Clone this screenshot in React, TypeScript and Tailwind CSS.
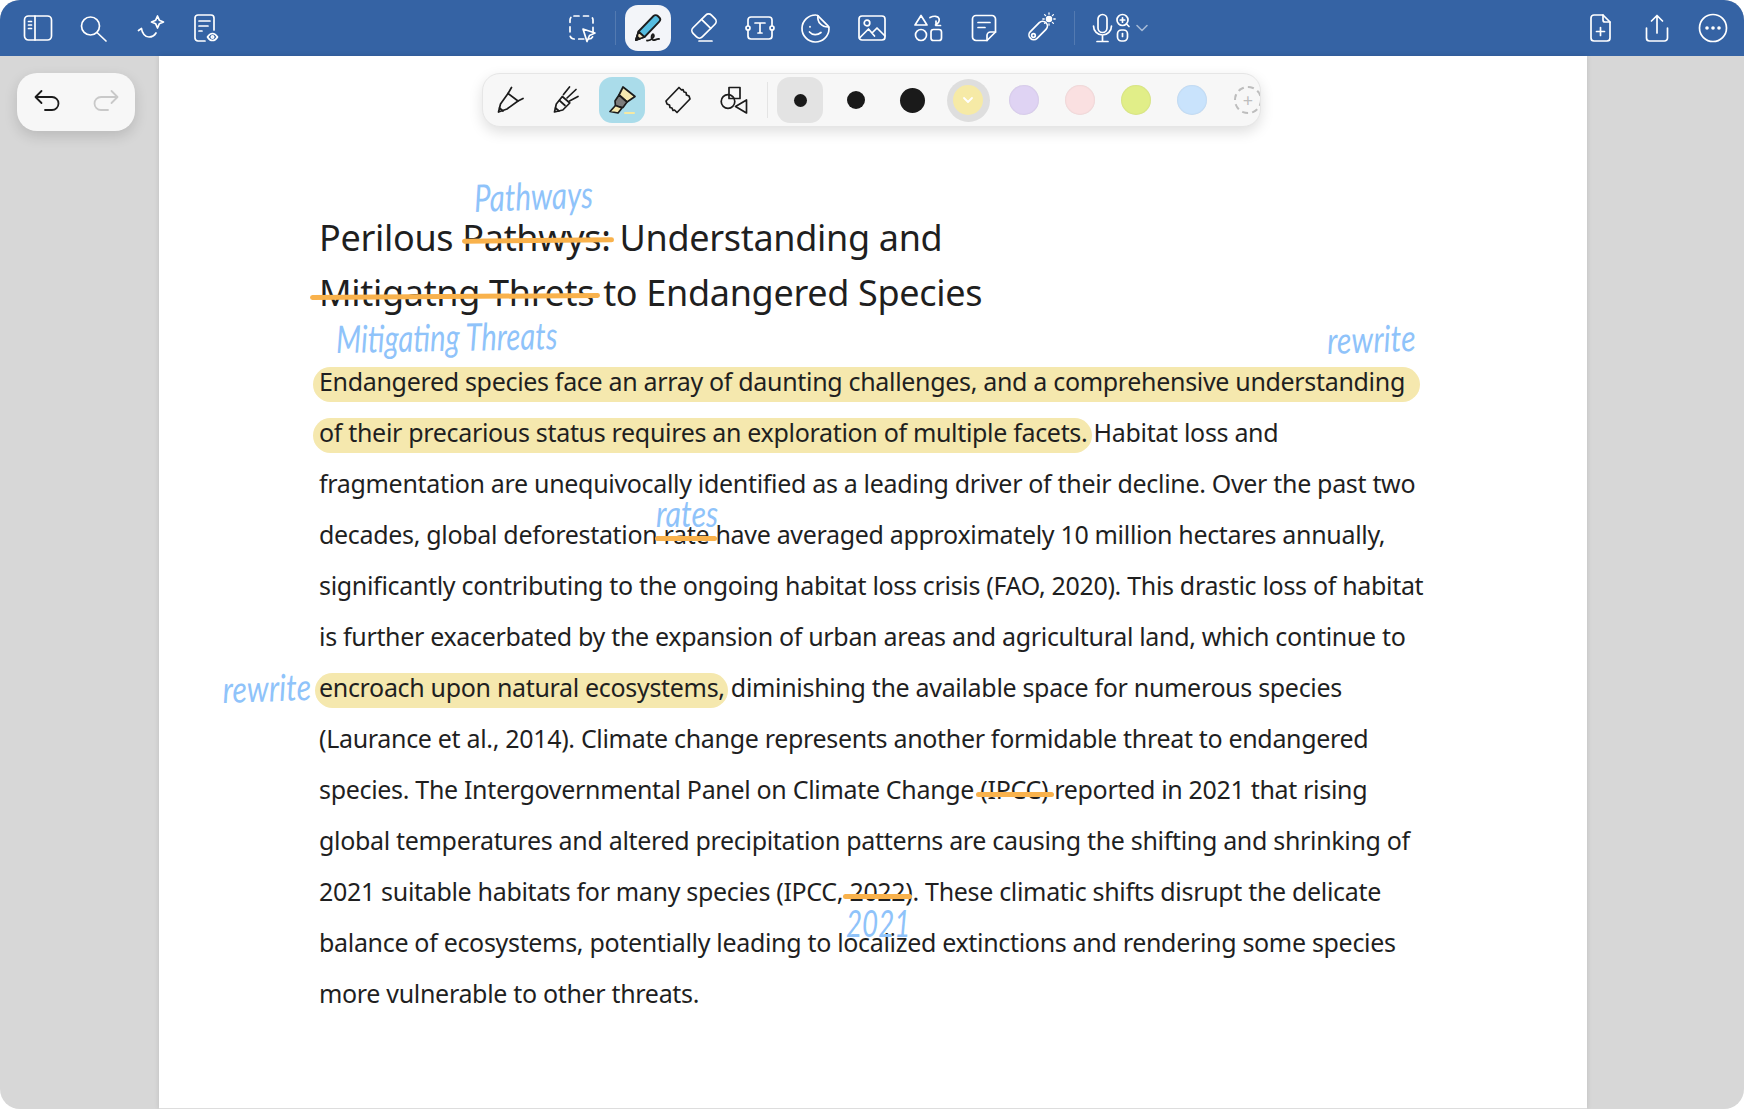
import React from 'react';

const HAND = "font-['Lato',sans-serif] font-normal italic text-[#8fc3fa] whitespace-nowrap tracking-normal";

const Svg = ({ children, dark }: { children: React.ReactNode; dark?: boolean }) => (
  <svg
    width="32"
    height="32"
    viewBox="0 0 32 32"
    fill="none"
    stroke={dark ? '#1c1c1c' : '#ffffff'}
    strokeWidth="1.7"
    strokeLinecap="round"
    strokeLinejoin="round"
  >
    {children}
  </svg>
);

const Slot = ({ children }: { children: React.ReactNode }) => (
  <div className="w-14 h-14 shrink-0 flex items-center justify-center">{children}</div>
);

const topLeft = [
  <Svg key="side">
    <rect x="2.5" y="4" width="27" height="24" rx="4" />
    <path d="M13 4v24M6.5 9.5h3M6.5 13h3M6.5 16.5h3" />
  </Svg>,
  <Svg key="search">
    <circle cx="12.5" cy="14" r="9" />
    <path d="M19 20.5l9 8.5" />
  </Svg>,
  <Svg key="ai">
    <path d="M23.5 4l1.8 4.2 4.2 1.8-4.2 1.8-1.8 4.2-1.8-4.2-4.2-1.8 4.2-1.8z" />
    <path d="M4.5 18.5l3-2c.5 4.5 3.500 8.500 7.500 8.500 3 0 5.500-1.500 7-4" />
  </Svg>,
  <Svg key="doc">
    <path d="M15 29H8a3 3 0 0 1-3-3V6a3 3 0 0 1 3-3h13a3 3 0 0 1 3 3v12" />
    <path d="M9 9h11M9 14h9M9 19h3" />
    <path d="M17.500 25c1.500-2.500 3.500-3.500 5-3.500s3.500 1 5 3.500c-1.500 2.500-3.500 3.500-5 3.500s-3.500-1-5-3.500z" />
    <circle cx="22.500" cy="25" r="1.200" />
  </Svg>,
];

const topMiddle = [
  <Svg key="eraser">
    <g transform="rotate(45 16 14)">
      <rect x="9.500" y="1" width="13" height="26" rx="4" />
      <path d="M9.500 11h13" />
    </g>
    <path d="M11 29h13" />
  </Svg>,
  <Svg key="text">
    <rect x="4" y="5" width="24" height="22" rx="3" />
    <circle cx="4" cy="16" r="2" fill="#3563a4" />
    <circle cx="28" cy="16" r="2" fill="#3563a4" />
    <path d="M11 11h10M16 11v10M14 21h4" />
  </Svg>,
  <Svg key="sticker">
    <path d="M29 17A13.500 13.500 0 1 1 16 3c.8 0 1.500.3 2 .8l10 10c.7.7 1 1.500 1 3.200z" />
    <path d="M18 3.800c-1 6 3.500 11.500 10.800 11.200" />
    <path d="M10 14.500v.5M9.500 20c3 3.500 8 3.500 11.500.5" />
  </Svg>,
  <Svg key="image">
    <rect x="3" y="4" width="26" height="24" rx="3" />
    <circle cx="11" cy="11" r="2.800" />
    <path d="M3.500 26l9-9 6 7M16 21l5-5 8 8" />
  </Svg>,
  <Svg key="shapes">
    <path d="M9 3.500l6 9.500H3z" />
    <path d="M18 5.500c4-2 8-1.500 9 1 1 3-1 5-3.500 6.500M24 9v4.500h4.500" />
    <circle cx="9" cy="23" r="5.500" />
    <rect x="19" y="17.500" width="10.500" height="11" rx="2.500" />
  </Svg>,
  <Svg key="note">
    <path d="M19 28.500H8a3.500 3.500 0 0 1-3.500-3.500V7A3.500 3.500 0 0 1 8 3.500h16A3.500 3.500 0 0 1 27.500 7v13z" />
    <path d="M27.500 20h-5a3.500 3.500 0 0 0-3.500 3.500v5M10 10.500h12M10 15.500h7" />
  </Svg>,
  <Svg key="wand">
    <rect x="9" y="7.500" width="9.500" height="22" rx="4.700" transform="rotate(45 14 19)" />
    <circle cx="9.500" cy="23.500" r="1.800" />
    <circle cx="25" cy="7" r="2.400" fill="#ffffff" />
    <path d="M25 .8v1.400M25 11.800v1.400M18.800 7h1.400M29.800 7h1.400M20.600 2.600l1 1M28.400 10.400l1 1M29.400 2.600l-1 1M21.600 10.400l-1 1" strokeWidth="1.300" />
  </Svg>,
];

const Pen = () => (
  <svg width="32" height="32" viewBox="0 0 32 32" strokeLinejoin="round" strokeLinecap="round" stroke="#1c1c1c" strokeWidth="1.800">
    <path d="M4 28l2.500-8.500L21.500 4a3 3 0 0 1 4.300 0l1.500 1.500a3 3 0 0 1 0 4.200L12.500 25z" fill="#56bde0" />
    <path d="M4 28l2.500-8.500 6 5.500z" fill="#f4e6bf" />
    <path d="M4 28l1-3.600 2.600 2.400z" fill="#1c1c1c" />
    <path d="M15 28.500c4 .5 8-4 6.500-6-1.800-1.500-3 4-.5 5.500 2 .8 3.500-1.500 6-1" fill="none" />
  </svg>
);

const Card = ({ children, className }: { children: React.ReactNode; className: string }) => (
  <div className={`absolute bg-[#f7f7f7] ${className}`}>{children}</div>
);

const Pencil = () => (
  <Svg dark>
    <path d="M4.500 28L6.500 20 14 9.500 24 17 13 25z" />
    <path d="M17.500 3.500L14 9.500M24 17l5-2.500M5.500 24l3.500 3" />
  </Svg>
);

const Brush = () => (
  <Svg dark>
    <path d="M4.500 28l1.800-8 6-7.500 7.500 6.500-7 7z" />
    <path d="M13.500 10.500l6-7.500M17 14l9-8.500M19.500 17l8.500-4.500" />
    <path d="M5.500 24l3.500 3M9.500 16.500l5.500 5" />
  </Svg>
);

const Highlighter = () => (
  <svg width="32" height="32" viewBox="0 0 32 32" strokeLinejoin="round" strokeLinecap="round" stroke="#1c1c1c" strokeWidth="1.700">
    <path d="M13 11l4-8 12 9.500-8 5.500z" fill="#f5e9b0" />
    <path d="M13 11l8 7-4 5.500-7.500-1.500-.5-5z" fill="#7c7c7c" />
    <path d="M9.500 21.500L4 27.500l8 1.500 4-5z" fill="#f5e9b0" />
    <path d="M19 29h9" stroke="#f5e9a3" strokeWidth="2" />
  </svg>
);

const Lasso = () => (
  <Svg dark>
    <path d="M17 3.500l2.500 2.500 1.500-.5 1 2.500 2 .5.500 2.500 2.500 1 1 3L15 28.500 12.500 26l-1.500.5-1-2.500-2-.5-.5-2.500-2.500-1-1-3z" />
  </Svg>
);

const Shapes = () => (
  <Svg dark>
    <rect x="11" y="3.500" width="11" height="11" />
    <circle cx="10" cy="17.500" r="6.800" />
    <path d="M28.500 16v13L17.500 22.500z" />
  </Svg>
);

const dots = [
  { cls: 'w-[13px] h-[13px]', box: true },
  { cls: 'w-[18px] h-[18px]', box: false },
  { cls: 'w-[25px] h-[25px]', box: false },
];

const colours = ['bg-[#dfd3f3]', 'bg-[#fae0e1]', 'bg-[#e1ee88]', 'bg-[#c9e3fc]'];

// crossed-out word with the handwritten correction next to it
const Mark = ({
  children,
  barClass,
  note,
  noteClass,
}: {
  children: React.ReactNode;
  barClass: string;
  note?: string;
  noteClass?: string;
}) => (
  <span className="relative inline-block">
    {children}
    <span className={`absolute h-[5px] rounded-full bg-[#f9b24c] ${barClass}`} />
    {note && <span className={`absolute ${HAND} ${noteClass}`}>{note}</span>}
  </span>
);

// band sits behind the text, a little lower than the font's own box
const Hl = ({ children, bandClass }: { children: React.ReactNode; bandClass: string }) => (
  <span className="relative">
    <span className={`absolute top-[3px] h-[35px] -z-10 bg-[#f5e8ae] rounded-[18px] ${bandClass}`} />
    {children}
  </span>
);

const App = () => {
  return (
    <div className="w-[1744px] h-[1110px] bg-white font-['Noto_Sans',sans-serif] text-[#1f1f1f]">
      <div className="h-[1109px] rounded-[20px] overflow-hidden flex flex-col bg-[#d7d7d7]">
        {/* top bar */}
        <div className="h-14 shrink-0 bg-[#3563a4] flex items-center pl-[10px] pr-[3px]">
          {topLeft.map((icon) => (
            <Slot key={icon.key}>{icon}</Slot>
          ))}
          <div className="ml-[320px]">
            <Slot>
              <Svg>
                <rect x="4" y="4" width="23" height="23" rx="4" strokeDasharray="5 4.500" />
                <path d="M17 17l12 4-5.500 2.500L21 29.500z" fill="#3563a4" />
              </Svg>
            </Slot>
          </div>
          <div className="w-[1px] h-[34px] ml-[5px] mr-[4px] bg-white/15" />
          <div className="w-14 h-14 shrink-0 flex items-center justify-center">
            <div className="w-[46px] h-[46px] rounded-[13px] bg-[#f3f5f9] flex items-center justify-center">
              <Pen />
            </div>
          </div>
          {topMiddle.map((icon) => (
            <Slot key={icon.key}>{icon}</Slot>
          ))}
          <div className="w-[1px] h-[34px] ml-[6px] bg-white/15" />
          <div className="flex items-center ml-[13px]">
            <svg width="44" height="32" viewBox="0 0 44 32" fill="none" stroke="#ffffff" strokeWidth="1.700" strokeLinecap="round" strokeLinejoin="round">
              <rect x="10" y="2.500" width="9" height="18" rx="4.500" />
              <path d="M5.500 14a9 9 0 0 0 18 0M14.500 23v6M9 29.500h11" />
              <circle cx="34.500" cy="8" r="5.500" />
              <path d="M34.500 5.800v4.400M32.300 8h4.400M38.500 12l2.500 2.500" />
              <rect x="29.500" y="18" width="10" height="11" rx="4" />
              <path d="M34.500 21.500v3" />
            </svg>
            <svg width="14" height="10" viewBox="0 0 14 10" fill="none" stroke="#ffffff" strokeOpacity="0.55" strokeWidth="1.600" strokeLinecap="round" strokeLinejoin="round" className="ml-[3px]">
              <path d="M2 2.500l5 5 5-5" />
            </svg>
          </div>
          <div className="ml-auto flex">
            <Slot>
              <Svg>
                <path d="M18 3H9a3 3 0 0 0-3 3v20a3 3 0 0 0 3 3h13a3 3 0 0 0 3-3V10z" />
                <path d="M18 3v5a2 2 0 0 0 2 2h5M15.500 15.500v8M11.500 19.500h8" />
              </Svg>
            </Slot>
            <Slot>
              <Svg>
                <path d="M5.500 16v10a3 3 0 0 0 3 3h15a3 3 0 0 0 3-3V16M16 21V3.500M10.500 9L16 3.500 21.500 9" />
              </Svg>
            </Slot>
            <Slot>
              <Svg>
                <circle cx="16" cy="16" r="13.500" />
                <circle cx="10" cy="16" r="1.800" fill="#ffffff" stroke="none" />
                <circle cx="16" cy="16" r="1.800" fill="#ffffff" stroke="none" />
                <circle cx="22" cy="16" r="1.800" fill="#ffffff" stroke="none" />
              </Svg>
            </Slot>
          </div>
        </div>

        {/* canvas */}
        <div className="relative flex-1 flex">
          <div className="w-[159px] shrink-0" />
          <div className="relative flex-1 bg-white border-b border-[#dddddd] shadow-[0_0_5px_rgba(0,0,0,0.12)] pl-[160px] pt-[154px]">
            {/* pen options */}
            <Card className="left-[323px] top-[17px] w-[779px] h-[54px] rounded-[18px] border border-[#e6e6e6] shadow-[0_5px_14px_rgba(0,0,0,0.13)] overflow-hidden flex items-center">
              <div className="-ml-[1px]"><Slot><Pencil /></Slot></div>
              <Slot><Brush /></Slot>
              <div className="w-14 h-14 shrink-0 flex items-center justify-center">
                <div className="w-[46px] h-[46px] rounded-[13px] bg-[#aadcea] flex items-center justify-center">
                  <Highlighter />
                </div>
              </div>
              <Slot><Lasso /></Slot>
              <Slot><Shapes /></Slot>
              <div className="w-[1px] h-[36px] ml-[5px] mr-[4px] bg-[#e4e4e4] shrink-0" />
              {dots.map((d, i) => (
                <div key={i} className="w-14 h-14 shrink-0 flex items-center justify-center">
                  <div className={`w-[46px] h-[46px] rounded-[13px] flex items-center justify-center ${d.box ? 'bg-[#e3e3e3]' : ''}`}>
                    <div className={`rounded-full bg-[#1a1a1a] ${d.cls}`} />
                  </div>
                </div>
              ))}
              <div className="w-14 h-14 shrink-0 flex items-center justify-center">
                <div className="w-[43px] h-[43px] rounded-full bg-[#dedede] flex items-center justify-center">
                  <div className="w-[30px] h-[30px] rounded-full bg-[#f6eaa6] flex items-center justify-center">
                    <svg width="12" height="8" viewBox="0 0 12 8" fill="none" stroke="#ffffff" strokeWidth="1.800" strokeLinecap="round" strokeLinejoin="round">
                      <path d="M2 2l4 4 4-4" />
                    </svg>
                  </div>
                </div>
              </div>
              {colours.map((c) => (
                <div key={c} className="w-14 h-14 shrink-0 flex items-center justify-center">
                  <div className={`w-[30px] h-[30px] rounded-full shadow-[inset_0_0_2px_rgba(0,0,0,0.12)] ${c}`} />
                </div>
              ))}
              <div className="w-14 h-14 shrink-0 flex items-center justify-center">
                <div className="w-[28px] h-[28px] rounded-full border-2 border-dashed border-[#bdbdbd] flex items-center justify-center text-[#bdbdbd] text-[18px] leading-none">+</div>
              </div>
            </Card>

            <h1 className="text-[36px] leading-[55px] font-normal whitespace-nowrap tracking-[-0.32px]">
              <div>
                Perilous{' '}
                <Mark barClass="left-0 right-[-4px] top-[28px] -rotate-[0.5deg]" note="Pathways" noteClass="left-[12px] top-[-38px] text-[38px] leading-[50px] scale-x-[0.78] origin-left -rotate-2">
                  Pathwys:
                </Mark>{' '}
                Understanding and
              </div>
              <div>
                <Mark barClass="left-[-9px] right-[-6px] top-[29px] -rotate-[0.4deg]" note="Mitigating Threats" noteClass="left-[17px] top-[48px] text-[38px] leading-[50px] scale-x-[0.77] origin-left -rotate-1">
                  Mitigatng Threts
                </Mark>{' '}
                to Endangered Species
              </div>
            </h1>

            <div className="isolate mt-[36px] text-[25px] leading-[51px] whitespace-nowrap tracking-[-0.32px]">
              <p className="relative">
                <Hl bandClass="left-[-6px] right-[-15px]">Endangered species face an array of daunting challenges, and a comprehensive understanding</Hl>
                <span className={`absolute left-[1008px] top-[-41px] text-[37px] leading-[50px] scale-x-[0.82] origin-left -rotate-2 ${HAND}`}>rewrite</span>
              </p>
              <p>
                <Hl bandClass="left-[-6px] right-[-5px]">of their precarious status requires an exploration of multiple facets.</Hl> Habitat loss and
              </p>
              <p>fragmentation are unequivocally identified as a leading driver of their decline. Over the past two</p>
              <p>
                decades, global deforestation{' '}
                <Mark barClass="left-[-9px] right-[-8px] top-[27px]" note="rates" noteClass="left-[-8px] top-[-21px] text-[37px] leading-[50px] scale-x-[0.82] origin-left">
                  rate
                </Mark>{' '}
                have averaged approximately 10 million hectares annually,
              </p>
              <p>significantly contributing to the ongoing habitat loss crisis (FAO, 2020). This drastic loss of habitat</p>
              <p>is further exacerbated by the expansion of urban areas and agricultural land, which continue to</p>
              <p>
                <Hl bandClass="left-[-4px] right-[-3px]">
                  <span className={`absolute right-full mr-[8px] top-[-9px] text-[37px] leading-[50px] scale-x-[0.82] origin-right -rotate-2 ${HAND}`}>rewrite</span>
                  encroach upon natural ecosystems,
                </Hl>{' '}
                diminishing the available space for numerous species
              </p>
              <p>(Laurance et al., 2014). Climate change represents another formidable threat to endangered</p>
              <p>
                species. The Intergovernmental Panel on Climate Change{' '}
                <Mark barClass="left-[-4px] right-[-6px] top-[28px]">(IPCC)</Mark> reported in 2021 that rising
              </p>
              <p>global temperatures and altered precipitation patterns are causing the shifting and shrinking of</p>
              <p>
                2021 suitable habitats for many species (IPCC,{' '}
                <Mark barClass="left-[-6px] right-[-7px] top-[28px]" note="2021" noteClass="left-[-3px] top-[32px] text-[37px] leading-[50px] scale-x-[0.75] origin-left">
                  2022
                </Mark>
                ). These climatic shifts disrupt the delicate
              </p>
              <p>balance of ecosystems, potentially leading to localized extinctions and rendering some species</p>
              <p>more vulnerable to other threats.</p>
            </div>
          </div>
          <div className="w-[157px] shrink-0" />

          {/* undo / redo */}
          <Card className="left-[17px] top-[17px] w-[118px] h-[58px] rounded-[20px] shadow-[0_5px_14px_rgba(0,0,0,0.14)] flex items-center justify-center gap-[25px] pb-[4px]">
            <svg width="32" height="32" viewBox="0 0 32 32" fill="none" stroke="#1c1c1c" strokeWidth="1.800" strokeLinecap="round" strokeLinejoin="round">
              <path d="M9.500 7L3.500 13l6 6M4 13h16a6.500 6.500 0 0 1 0 13h-7" />
            </svg>
            <svg width="32" height="32" viewBox="0 0 32 32" fill="none" stroke="#c9c9c9" strokeWidth="1.800" strokeLinecap="round" strokeLinejoin="round">
              <path d="M22.500 7l6 6-6 6M28 13H12a6.500 6.500 0 0 0 0 13h7" />
            </svg>
          </Card>
        </div>
      </div>
    </div>
  );
};

export default App;
